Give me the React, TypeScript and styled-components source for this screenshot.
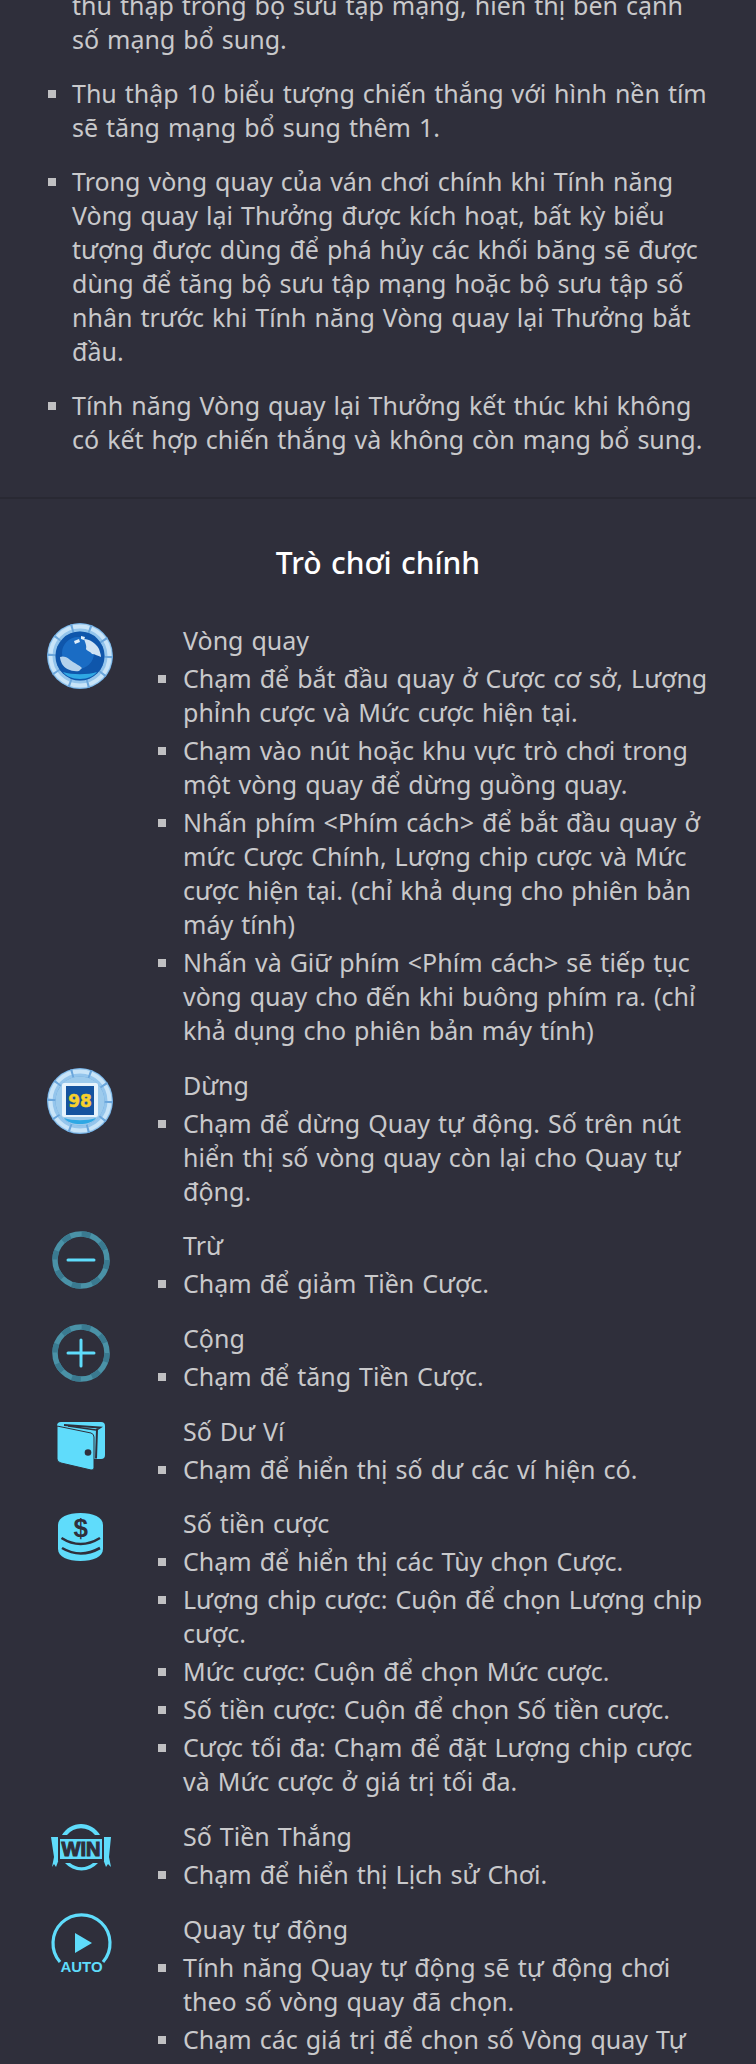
import styled, { createGlobalStyle } from 'styled-components';

const CYAN = '#5fdcfb';
const BG = '#2f2f3b';

const Global = createGlobalStyle`
  html, body {
    margin: 0;
    padding: 0;
    background: ${BG};
  }
  body {
    font-family: "Noto Sans", "Open Sans", sans-serif;
    overflow: hidden;
  }
`;

const Page = styled.div`
  width: 756px;
  height: 2064px;
  overflow: hidden;
  background: ${BG};
  color: #c9c9cb;
  font-size: 25px;
  line-height: 34px;
  word-spacing: 1.5px;
`;

// the panel is scrolled, so the first line is cut by the top edge
const Scrolled = styled.div`
  margin-top: -12px;
`;

const TopList = styled.ul`
  list-style: none;
  margin: 0;
  padding: 0 36px 41px 72px;
  border-bottom: 2px solid #292933;
`;

const TopItem = styled.li<{ $continued?: boolean }>`
  position: relative;
  margin-bottom: 20px;
  padding-right: ${(p) => (p.$continued ? '20px' : '0')};
  &:last-child {
    margin-bottom: 0;
  }
  &::before {
    content: '';
    display: ${(p) => (p.$continued ? 'none' : 'block')};
    position: absolute;
    left: -24px;
    top: 14px;
    width: 8px;
    height: 8px;
    background: #c0c0c2;
  }
`;

const Title = styled.h2`
  margin: 0;
  padding: 47px 0 43px;
  text-align: center;
  color: #fff;
  font-size: 30px;
  font-weight: 500;
  line-height: 34px;
`;

const Rows = styled.div`
  display: flex;
  flex-direction: column;
  gap: 20.7px;
  padding: 0 36px 0 47px;
`;

const Row = styled.div`
  display: grid;
  grid-template-columns: 66px 1fr;
  column-gap: 70px;
`;

const IconBox = styled.svg`
  display: block;
  width: 66px;
  height: 66px;
`;

const Label = styled.div`
  margin-bottom: 4px;
`;

const Bullets = styled.ul`
  list-style: none;
  margin: 0;
  padding: 0;
`;

const Bullet = styled.li`
  position: relative;
  margin-bottom: 4px;
  &:last-child {
    margin-bottom: 0;
  }
  &::before {
    content: '';
    position: absolute;
    left: -25px;
    top: 14px;
    width: 8px;
    height: 8px;
    background: #c0c0c2;
  }
`;

const Ring = () => (
  <>
    <circle cx="33" cy="33" r="33" fill="#5f9ed6" />
    <circle cx="33" cy="33" r="28.500" fill="none" stroke="#94c5ec" strokeWidth="8" />
    <circle cx="33" cy="33" r="29.500" fill="none" stroke="#c8e4f8" strokeWidth="4" />
    <circle cx="33" cy="33" r="28.500" fill="none" stroke="#6aa6dc" strokeWidth="9" strokeDasharray="2 15.900" />
  </>
);

const SpinIcon = () => (
  <IconBox viewBox="0 0 66 66">
    <Ring />
    <circle cx="33" cy="33" r="24.500" fill="#0f56ab" />
    <circle cx="31" cy="30" r="16" fill="#1a6cc4" />
    <path d="M13 34c5-2 9 2 13 5 3 2 6 3 9 6l-3 3c-7 1-14-2-17-7-1-2-2-5-2-7z" fill="#b4d2ec" />
    <path d="M37 16c5 0 12 4 15 10 1 3 2 6 2 8-3-1-6-3-9-3-2-3-5-3-6-5 1-3-1-7-2-10z" fill="#cfe3f4" />
    <path d="M27 18l5-2 1 3-5 2zM34 13l4 1-1 3-3-1z" fill="#dfeefa" />
    <path d="M16 49c9 3 25 3 34 0-3 4-9 7-17 7s-14-3-17-7z" fill="#2fa8e4" />
  </IconBox>
);

const StopIcon = () => (
  <IconBox viewBox="0 0 66 66">
    <Ring />
    <circle cx="33" cy="33" r="24.500" fill="#9ccaec" />
    <rect x="15" y="15" width="36" height="34" rx="2" fill="#e6f3fc" />
    <rect x="19" y="18" width="28" height="29" fill="#14539f" />
    <path d="M17 50c9 3 23 3 32 0-3 4-9 6-16 6s-13-2-16-6z" fill="#2fa8e4" />
    <text x="33" y="39" textAnchor="middle" fontFamily="DejaVu Sans" fontWeight="700" fontSize="17" fill="#f7d02c" stroke="#f7d02c" strokeWidth="0.500">
      98
    </text>
  </IconBox>
);

const RoundIcon = ({ plus }: { plus?: boolean }) => (
  <IconBox viewBox="0 0 66 66">
    <circle cx="34" cy="32" r="26" fill="none" stroke="#4a92a7" strokeWidth="5.500" />
    <circle cx="34" cy="32" r="26" fill="none" stroke="#3a7a90" strokeWidth="5.500" strokeDasharray="9 11.400" />
    <path d="M21 32h26" stroke={CYAN} strokeWidth="3" strokeLinecap="round" />
    {plus && <path d="M34 19v26" stroke={CYAN} strokeWidth="3" strokeLinecap="round" />}
  </IconBox>
);

const WalletIcon = () => (
  <IconBox viewBox="0 0 66 66">
    <rect x="10" y="8" width="48" height="37" rx="4" fill={CYAN} />
    <path d="M17 11l36 2.500-3 2-1 29" fill="none" stroke={BG} strokeWidth="2" />
    <path d="M21 12l28 4" fill="none" stroke={BG} strokeWidth="1.500" />
    <path d="M10 12l34 7q3 1 3 4v31q0 2.500-3 2l-30-7q-4-1-4-4z" fill={CYAN} stroke={BG} strokeWidth="1" />
    <circle cx="41" cy="38.500" r="3.300" fill={BG} />
  </IconBox>
);

const CoinsIcon = () => (
  <IconBox viewBox="0 0 66 66">
    <path d="M11 19c0-8 10-12 22.500-12S56 11 56 19v24c0 8-10 12-22.500 12S11 51 11 43z" fill={CYAN} />
    <path d="M14.500 32q19 12 38.500 0M15 42q18.500 11 38 0" fill="none" stroke={BG} strokeWidth="2.600" />
    <text x="33.700" y="31" textAnchor="middle" fontFamily="Liberation Sans" fontWeight="700" fontSize="26" fill={BG}>
      $
    </text>
  </IconBox>
);

const WinIcon = () => (
  <IconBox viewBox="0 0 66 66">
    <path d="M15 16a22 22 0 0 1 38 0h-5a18 18 0 0 0-28 0z" fill={CYAN} />
    <path d="M18 44a22 22 0 0 0 33 0h-5a18 18 0 0 1-23 0z" fill={CYAN} />
    <path d="M4 18h8v22l-3 8-2-3-2 3 2-10z" fill={CYAN} />
    <path d="M64 18h-8v22l3 8 2-3 3 3-2-10z" fill={CYAN} />
    <rect x="11" y="18" width="46" height="24" fill={BG} />
    <rect x="13" y="20" width="42" height="20" fill={CYAN} />
    <text x="34" y="37" textAnchor="middle" fontFamily="Liberation Sans" fontWeight="700" fontSize="20" fill={BG} stroke={BG} strokeWidth="1.100">
      WIN
    </text>
  </IconBox>
);

const AutoIcon = () => (
  <IconBox viewBox="0 0 66 66">
    <path d="M13 50a28.500 28.500 0 1 1 43 0" fill="none" stroke={CYAN} strokeWidth="3.200" />
    <path d="M28 21v20l17-10z" fill={CYAN} />
    <text x="34.500" y="60" textAnchor="middle" fontFamily="Liberation Sans" fontWeight="700" fontSize="15" fill={CYAN}>
      AUTO
    </text>
  </IconBox>
);

const topItems = [
  'thu thập trong bộ sưu tập mạng, hiển thị bên cạnh số mạng bổ sung.',
  'Thu thập 10 biểu tượng chiến thắng với hình nền tím sẽ tăng mạng bổ sung thêm 1.',
  'Trong vòng quay của ván chơi chính khi Tính năng Vòng quay lại Thưởng được kích hoạt, bất kỳ biểu tượng được dùng để phá hủy các khối băng sẽ được dùng để tăng bộ sưu tập mạng hoặc bộ sưu tập số nhân trước khi Tính năng Vòng quay lại Thưởng bắt đầu.',
  'Tính năng Vòng quay lại Thưởng kết thúc khi không có kết hợp chiến thắng và không còn mạng bổ sung.',
];

const rows = [
  {
    icon: <SpinIcon />,
    label: 'Vòng quay',
    items: [
      'Chạm để bắt đầu quay ở Cược cơ sở, Lượng phỉnh cược và Mức cược hiện tại.',
      'Chạm vào nút hoặc khu vực trò chơi trong một vòng quay để dừng guồng quay.',
      'Nhấn phím <Phím cách> để bắt đầu quay ở mức Cược Chính, Lượng chip cược và Mức cược hiện tại. (chỉ khả dụng cho phiên bản máy tính)',
      'Nhấn và Giữ phím <Phím cách> sẽ tiếp tục vòng quay cho đến khi buông phím ra. (chỉ khả dụng cho phiên bản máy tính)',
    ],
  },
  {
    icon: <StopIcon />,
    label: 'Dừng',
    items: ['Chạm để dừng Quay tự động. Số trên nút hiển thị số vòng quay còn lại cho Quay tự động.'],
  },
  { icon: <RoundIcon />, label: 'Trừ', items: ['Chạm để giảm Tiền Cược.'] },
  { icon: <RoundIcon plus />, label: 'Cộng', items: ['Chạm để tăng Tiền Cược.'] },
  { icon: <WalletIcon />, label: 'Số Dư Ví', items: ['Chạm để hiển thị số dư các ví hiện có.'] },
  {
    icon: <CoinsIcon />,
    label: 'Số tiền cược',
    items: [
      'Chạm để hiển thị các Tùy chọn Cược.',
      'Lượng chip cược: Cuộn để chọn Lượng chip cược.',
      'Mức cược: Cuộn để chọn Mức cược.',
      'Số tiền cược: Cuộn để chọn Số tiền cược.',
      'Cược tối đa: Chạm để đặt Lượng chip cược và Mức cược ở giá trị tối đa.',
    ],
  },
  { icon: <WinIcon />, label: 'Số Tiền Thắng', items: ['Chạm để hiển thị Lịch sử Chơi.'] },
  {
    icon: <AutoIcon />,
    label: 'Quay tự động',
    items: [
      'Tính năng Quay tự động sẽ tự động chơi theo số vòng quay đã chọn.',
      'Chạm các giá trị để chọn số Vòng quay Tự động.',
    ],
  },
];

export default function App() {
  return (
    <Page>
      <Global />
      <Scrolled>
        <TopList>
          {topItems.map((t, i) => (
            <TopItem key={t} $continued={i === 0}>
              {t}
            </TopItem>
          ))}
        </TopList>
        <Title>Trò chơi chính</Title>
        <Rows>
          {rows.map((r) => (
            <Row key={r.label}>
              {r.icon}
              <div>
                <Label>{r.label}</Label>
                <Bullets>
                  {r.items.map((t) => (
                    <Bullet key={t}>{t}</Bullet>
                  ))}
                </Bullets>
              </div>
            </Row>
          ))}
        </Rows>
      </Scrolled>
    </Page>
  );
}
